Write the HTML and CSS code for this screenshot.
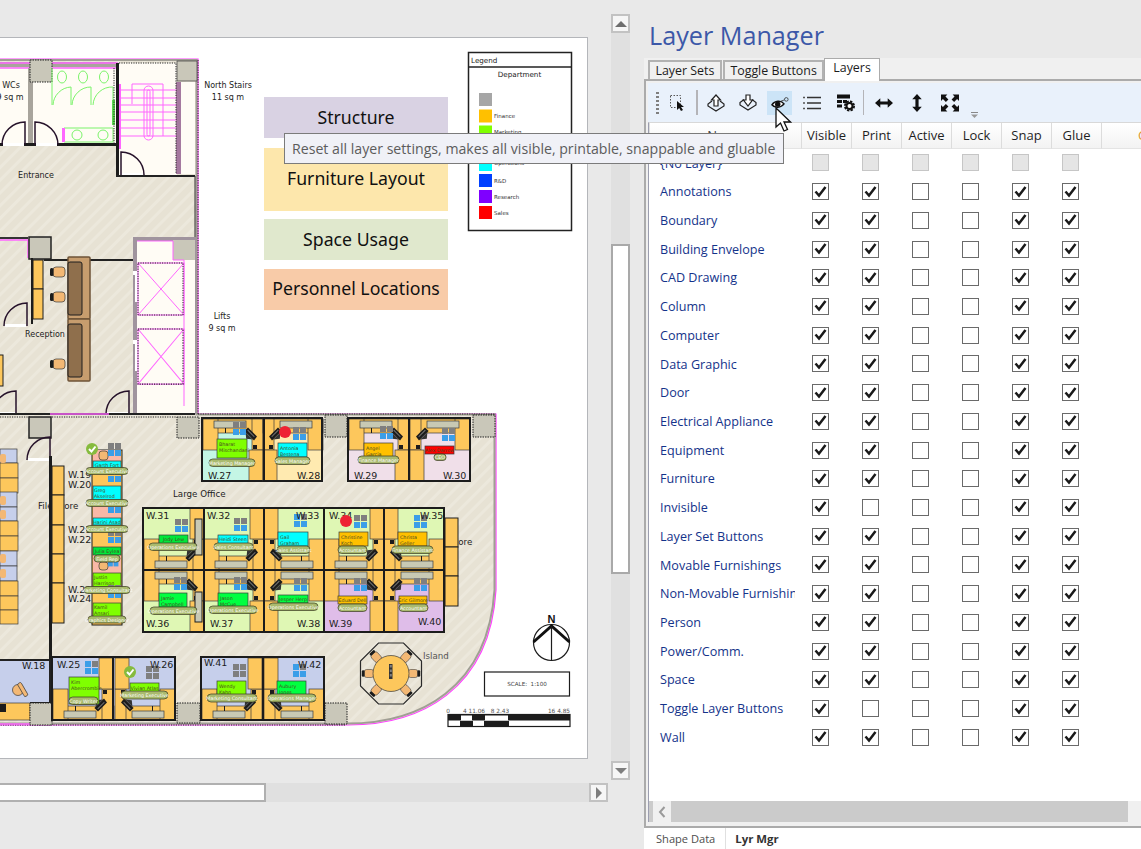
FILE: index.html
```html
<!DOCTYPE html>
<html lang="en">
<head>
<meta charset="utf-8">
<title>Layer Manager</title>
<link rel="stylesheet" href="styles.css">
</head>
<body>
<div class="app">
  <section class="work">
    <div class="page">
      <svg class="plan" viewBox="0 38 587 720" width="587" height="720" xmlns="http://www.w3.org/2000/svg">
        <defs>
          <path id="t" d="M3.500 8.500L7 12.500L13.500 4"/>
          <pattern id="hatch" width="9" height="9" patternUnits="userSpaceOnUse" patternTransform="rotate(45)">
            <rect width="9" height="9" class="f-floor"/>
            <rect width="3" height="9" class="f-hatch"/>
          </pattern>
          <g id="chair"><path d="M-8 -3L7 -3L8 3L-8 3Z" class="f-black"/><path d="M-6 3L6 3L0 8Z" class="f-dark"/><rect x="-6" y="-1" width="11" height="1" class="f-gray"/></g>
          <g id="ws">
            <rect x="0" y="0" width="60" height="14" class="f-org s-thin"/>
            <rect x="0" y="0" width="15" height="31" class="f-org s-thin"/>
            <rect x="49" y="0" width="11" height="31" class="f-org s-thin"/>
            <rect x="46" y="31" width="14" height="31" class="f-org s-thin"/>
            <rect x="11" y="2" width="32" height="7" class="f-shelf s-thin"/>
            <rect x="22" y="9" width="1" height="5" class="f-black"/>
            <use href="#chair" transform="translate(48,15) rotate(45) scale(.85)"/>
            <rect x="50" y="26" width="4" height="4" class="f-black"/>
          </g>
          <g id="ic"><rect x="0" y="0" width="6" height="6" class="f-gray"/><rect x="7" y="0" width="6" height="6" class="f-gray"/><rect x="0" y="7" width="6" height="6" class="f-blue"/><rect x="7" y="7" width="6" height="6" class="f-blue"/></g>
          <g id="icg"><rect x="0" y="0" width="6" height="6" class="f-gray"/><rect x="7" y="0" width="6" height="6" class="f-gray"/><rect x="0" y="7" width="6" height="6" class="f-gray"/><rect x="7" y="7" width="6" height="6" class="f-gray"/></g>
          <g id="icb"><rect x="0" y="0" width="6" height="6" class="f-blue"/><rect x="7" y="0" width="6" height="6" class="f-gray"/><rect x="0" y="7" width="6" height="6" class="f-blue"/><rect x="7" y="7" width="6" height="6" class="f-blue"/></g>
          <g id="door"><path d="M0 0V-23A23 23 0 0 0 -23 0" class="n-door"/><rect x="-22" y="-2" width="21" height="3" class="f-white"/></g>
          <g id="seat"><rect x="-6" y="-5" width="12" height="10" rx="3" class="f-tan s-thin"/><rect x="-9" y="-4" width="3.500" height="8" rx="1.500" class="f-black"/></g>
          <g id="lift"><rect width="46" height="52" class="n-mag"/><path d="M0 0L46 52M46 0L0 52" class="n-mag"/><rect x="0" y="0" width="45" height="52" class="n-dot"/></g>
        </defs>

        <rect x="0" y="38" width="587" height="720" class="f-white"/>

        <!-- building -->
        <path d="M-4 59H198V414H496V590C490 690 420 726 345 725H-4Z" class="f-hatchp s-mag"/>
        <path d="M-4 60H196.500V414.500H494.500V590C488 688 420 724 345 723.500H-4" class="n-outer"/>
        <path d="M198 60V414M198 414H496M345 725H-4" class="n-dot"/>

        <!-- toilets & north stairs -->
        <rect x="0" y="68" width="28" height="76" class="f-cream"/>
        <rect x="33" y="68" width="83" height="76" class="f-cream"/>
        <rect x="0" y="62" width="116" height="5" class="f-wall"/>
        <path d="M0 63H118M0 68H116" class="n-mag2"/>
        <rect x="28" y="68" width="5" height="76" class="f-wall"/>
        <rect x="0" y="143" width="118" height="3" class="f-black"/>
        <rect x="30" y="60" width="22" height="22" class="f-col s-dash"/>
        <g class="n-green">
          <ellipse cx="62" cy="77" rx="4.500" ry="6"/><ellipse cx="83" cy="77" rx="4.500" ry="6"/><ellipse cx="104" cy="77" rx="4.500" ry="6"/>
          <path d="M52 68V105M53 105A19 19 0 0 1 71 87V105M72 105A19 19 0 0 1 91 87V105M93 105A19 19 0 0 1 113 87V105"/>
          <path d="M64 128H113V142H64Z"/>
          <circle cx="77" cy="135" r="5"/><circle cx="103" cy="135" r="5"/>
        </g>
        <rect x="62" y="128" width="3" height="14" class="f-magenta"/>
        <rect x="112" y="100" width="3" height="25" class="f-green"/>
        <path d="M114 68V143" class="n-dot"/>
        <use href="#door" transform="translate(25,145)"/>
        <use href="#door" transform="translate(35,145) scale(-1,1)"/>

        <rect x="118" y="63" width="59" height="112" class="f-cream"/>
        <rect x="181" y="82" width="14" height="92" class="f-cream"/>
        <rect x="176" y="82" width="5" height="92" class="f-purple"/>
        <rect x="116" y="63" width="3" height="113" class="f-black"/>
        <rect x="177" y="61" width="20" height="20" class="f-col s-thin"/>
        <path d="M119 63H176V173M116 176H195" class="n-dot"/>
        <g class="n-mag">
          <path d="M119 90H176M119 98H176M119 105H176M119 112H176M119 120H176M119 128H176M119 136H176"/>
          <path d="M132 104V84H163V136"/>
          <rect x="144" y="86" width="9" height="54" rx="4.500"/>
          <rect x="147" y="90" width="3" height="46" rx="1.500"/>
        </g>
        <rect x="119" y="84" width="2" height="65" class="f-magenta"/>
        <use href="#door" transform="translate(121,175) scale(-1,1)"/>
        <path d="M116 176H195" class="n-wall"/>
        <path d="M195 176V237" class="n-wall1"/>

        <!-- reception -->
        <rect x="0" y="237" width="28" height="2" class="f-dark"/>
        <path d="M0 240H28V258" class="n-mag2"/>
        <rect x="29" y="237" width="22" height="22" class="f-col s-wall"/>
        <path d="M44 260H133" class="n-wall"/>
        <rect x="31" y="258" width="2" height="66" class="f-black"/>
        <rect x="33" y="260" width="10" height="29" class="f-org s-wall1"/>
        <rect x="33" y="289" width="10" height="30" class="f-org s-wall1"/>
        <use href="#door" transform="translate(27,326)"/>
        <rect x="68" y="257" width="22" height="62" rx="1" class="f-tan2 s-brown"/>
        <rect x="68" y="319" width="22" height="62" rx="1" class="f-tan2 s-brown"/>
        <rect x="68" y="262" width="14" height="53" rx="2" class="f-brown s-wall1"/>
        <rect x="68" y="324" width="14" height="53" rx="2" class="f-brown s-wall1"/>
        <use href="#seat" transform="translate(59,272)"/>
        <use href="#seat" transform="translate(59,297)"/>
        <use href="#seat" transform="translate(59,364)"/>
        <rect x="-2" y="355" width="5" height="31" class="f-org s-wall1"/>

        <!-- lifts -->
        <rect x="133" y="237" width="63" height="177" class="f-purple2"/>
        <rect x="137" y="241" width="58" height="172" class="f-cream"/>
        <rect x="173" y="240" width="22" height="20" class="f-col"/>
        <path d="M137 241H173V260H184V406" class="n-mag"/>
        <path d="M133 273H137V302M133 342H137V371" class="n-white"/>
        <use href="#lift" transform="translate(138,263)"/>
        <use href="#lift" transform="translate(138,329) scale(1,1.060)"/>
        <use href="#door" transform="translate(129,414)"/>
        <use href="#door" transform="translate(16,414)"/>

        <path d="M0 414H195" class="n-wall"/>
        <path d="M0 417H30M52 417H177" class="n-dot"/>
        <path d="M50 414H109" class="n-mag2"/>
        <rect x="29" y="417" width="22" height="21" class="f-col s-wall"/>
        <rect x="177" y="417" width="22" height="21" class="f-col s-dash"/>
        <rect x="325" y="415" width="22" height="22" class="f-col s-dash"/>
        <rect x="473" y="415" width="22" height="22" class="f-col s-dash"/>

        <!-- left wing -->
        <use href="#door" transform="translate(50,460)"/>
        <rect x="49" y="456" width="3" height="247" class="f-black"/>
        <rect x="0" y="449" width="17" height="14" class="f-bluer s-thin"/>
        <rect x="0" y="463" width="18" height="15" class="f-org s-thin"/><rect x="0" y="478" width="18" height="15" class="f-org s-thin"/>
        <rect x="0" y="492" width="17" height="15" class="f-bluer s-thin"/><rect x="0" y="507" width="17" height="14" class="f-bluer s-thin"/>
        <rect x="0" y="521" width="18" height="15" class="f-org s-thin"/><rect x="0" y="536" width="18" height="15" class="f-org s-thin"/>
        <rect x="0" y="551" width="17" height="15" class="f-bluer s-thin"/><rect x="0" y="566" width="17" height="15" class="f-bluer s-thin"/>
        <rect x="0" y="581" width="18" height="15" class="f-org s-thin"/><rect x="0" y="596" width="18" height="14" class="f-org s-thin"/>
        <rect x="0" y="610" width="18" height="14" class="f-org s-thin"/>
        <rect x="0" y="454" width="6" height="9" rx="2" class="f-tan"/><rect x="0" y="496" width="6" height="9" rx="2" class="f-tan"/><rect x="0" y="510" width="6" height="9" rx="2" class="f-tan"/><rect x="0" y="554" width="6" height="9" rx="2" class="f-tan"/><rect x="0" y="569" width="6" height="9" rx="2" class="f-tan"/>
        <text x="38" y="509" class="t-lab2">File Store</text>
        <rect x="52" y="466" width="12" height="29" class="f-org s-wall1"/><rect x="52" y="495" width="12" height="30" class="f-org s-wall1"/><rect x="52" y="525" width="12" height="29" class="f-org s-wall1"/><rect x="52" y="554" width="12" height="29" class="f-org s-wall1"/><rect x="52" y="583" width="12" height="40" class="f-org s-wall1"/>

        <!-- centre column stack -->
        <rect x="92" y="450" width="30" height="175" class="f-org s-wall1"/>
        <rect x="93" y="450" width="28" height="11" class="f-salmon"/>
        <rect x="93" y="500" width="28" height="18" class="f-salmon"/>
        <rect x="93" y="555" width="28" height="18" class="f-salmon"/>
        <rect x="99" y="451" width="9" height="9" rx="3" class="f-tan s-thin"/><rect x="99" y="562" width="9" height="8" rx="3" class="f-tan s-thin"/>
        <rect x="93" y="461" width="28" height="8" class="f-cyan s-thin"/><text x="107" y="467" class="t-card m">Garth Fort</text>
        <rect x="93" y="486" width="28" height="14" class="f-cyan s-thin"/><text x="94" y="492" class="t-card">Greg</text><text x="94" y="498" class="t-card">Akselrod</text>
        <rect x="93" y="518" width="28" height="7" class="f-cyan s-thin"/><text x="107" y="524" class="t-card m">Harini Asad</text>
        <rect x="93" y="547" width="28" height="8" class="f-lime2 s-thin"/><text x="107" y="553" class="t-card m">Julia Eylea</text>
        <rect x="93" y="573" width="28" height="14" class="f-lime s-thin"/><text x="94" y="579" class="t-card">Justin</text><text x="94" y="585" class="t-card">Harrison</text>
        <rect x="93" y="603" width="28" height="17" class="f-lime s-thin"/><text x="94" y="609" class="t-card">Kamil</text><text x="94" y="615" class="t-card">Ansari</text>
        <use href="#ic" transform="translate(108,443)"/>
        <use href="#ic" transform="translate(108,469)"/>
        <use href="#ic" transform="translate(108,500)"/>
        <use href="#ic" transform="translate(108,530)"/>
        <use href="#icb" transform="translate(108,556) scale(.8)"/>
        <use href="#ic" transform="translate(108,585)"/>
        <text x="68" y="479" class="t-w">W.19</text><text x="68" y="489" class="t-w">W.20</text>
        <text x="68" y="534" class="t-w">W.21</text><text x="68" y="544" class="t-w">W.22</text>
        <text x="68" y="594" class="t-w">W.23</text><text x="68" y="603" class="t-w">W.24</text>
        <rect x="86" y="467.500" width="42" height="7" rx="3.500" class="f-pill s-pill"/><text x="107" y="473" class="t-pill">Account Executive</text>
        <rect x="86" y="499.500" width="42" height="7" rx="3.500" class="f-pill s-pill"/><text x="107" y="505" class="t-pill">Account Executive</text>
        <rect x="86" y="525.500" width="42" height="7" rx="3.500" class="f-pill s-pill"/><text x="107" y="531" class="t-pill">Account Executive</text>
        <rect x="94" y="555" width="26" height="7" rx="3.500" class="f-pill s-pill"/><text x="107" y="560.500" class="t-pill">Field Rep</text>
        <rect x="84" y="586.500" width="46" height="7" rx="3.500" class="f-pill s-pill"/><text x="107" y="592" class="t-pill">Marketing Consultant</text>
        <rect x="88" y="616" width="38" height="7" rx="3.500" class="f-pill s-pill"/><text x="107" y="621.500" class="t-pill">Graphics Designer</text>
        <circle cx="92" cy="449" r="6" class="f-check"/><path d="M89 449L91.500 451.500L95.500 446.500" class="n-tick"/>

        <text x="173" y="497" class="t-lab2">Large Office</text>

        <!-- top row -->
        <rect x="202" y="418" width="62" height="63" class="f-mint"/>
        <use href="#ws" transform="translate(203,419)"/>
        <rect x="202" y="418" width="62" height="63" class="n-box"/>
        <text x="208" y="480" class="t-w">W.27</text>
        <use href="#ic" transform="translate(233,422)"/>
        <rect x="217" y="439" width="30" height="19" class="f-lime s-thin"/><text x="219" y="446" class="t-card">Bharat</text><text x="219" y="452" class="t-card">Mischandani</text>
        <rect x="209" y="459" width="46" height="7.500" rx="3.700" class="f-pill s-pill"/><text x="232" y="465" class="t-pill">Marketing Manager</text>

        <rect x="264" y="418" width="58" height="63" class="f-cream2"/>
        <use href="#ws" transform="translate(323,419) scale(-1,1)"/>
        <rect x="264" y="418" width="58" height="63" class="n-box"/>
        <text x="297" y="480" class="t-w">W.28</text>
        <circle cx="285" cy="432" r="6" class="f-red"/>
        <use href="#ic" transform="translate(293,427)"/>
        <rect x="278" y="443" width="29" height="14" class="f-cyan s-thin"/><text x="280" y="450" class="t-card">Antonia</text><text x="280" y="456" class="t-card">Bestena</text>
        <rect x="275" y="457" width="35" height="7.500" rx="3.700" class="f-pill s-pill"/><text x="292.500" y="463" class="t-pill">Sales Manager</text>

        <rect x="348" y="418" width="61" height="63" class="f-pink"/>
        <use href="#ws" transform="translate(349,419)"/>
        <rect x="348" y="418" width="61" height="63" class="n-box"/>
        <text x="354" y="480" class="t-w">W.29</text>
        <use href="#ic" transform="translate(380,426)"/>
        <rect x="364" y="443" width="29" height="14" class="f-amber s-thin"/><text x="366" y="450" class="t-card">Angel</text><text x="366" y="456" class="t-card">Garcia</text>
        <rect x="358" y="456" width="41" height="7.500" rx="3.700" class="f-pill s-pill"/><text x="378.500" y="462" class="t-pill">Finance Manager</text>

        <rect x="409" y="418" width="61" height="63" class="f-pink"/>
        <use href="#ws" transform="translate(470,419) scale(-1,1)"/>
        <rect x="409" y="418" width="61" height="63" class="n-box"/>
        <text x="443" y="480" class="t-w">W.30</text>
        <use href="#ic" transform="translate(442,428)"/>
        <rect x="425" y="446" width="29" height="8" class="f-red2 s-thin"/><text x="439.500" y="452" class="t-card m">Alex Darrow</text>
        <rect x="434" y="454" width="12" height="6.500" rx="3" class="f-pill s-pill"/><text x="440" y="459" class="t-pill">CEO</text>

        <!-- file store, right -->
        <text x="432" y="545" class="t-lab2">File Store</text>
        <rect x="445" y="518" width="13" height="29" class="f-org s-wall1"/><rect x="445" y="547" width="13" height="29" class="f-org s-wall1"/><rect x="445" y="576" width="13" height="30" class="f-org s-wall1"/>

        <!-- row 2 -->
        <rect x="143" y="508" width="61" height="62" class="f-green2"/>
        <use href="#ws" transform="translate(144,570) scale(1,-1)"/>
        <rect x="195" y="519" width="7" height="36" class="f-shelf s-wall1"/>
        <rect x="143" y="508" width="61" height="62" class="n-box"/>
        <text x="146" y="520" class="t-w">W.31</text>
        <use href="#ic" transform="translate(175,519)"/>
        <rect x="159" y="535" width="29" height="9" class="f-lime2 s-thin"/><text x="173.500" y="541" class="t-card m">Jody Lew</text>
        <rect x="149" y="543" width="48" height="7.500" rx="3.700" class="f-pill s-pill"/><text x="173" y="549" class="t-pill">Operations Executive</text>

        <rect x="204" y="508" width="60" height="62" class="f-green2"/>
        <use href="#ws" transform="translate(204,570) scale(1,-1)"/>
        <rect x="204" y="508" width="60" height="62" class="n-box"/>
        <text x="207" y="520" class="t-w">W.32</text>
        <use href="#ic" transform="translate(234,518)"/>
        <rect x="218" y="535" width="30" height="9" class="f-cyan s-thin"/><text x="233" y="541" class="t-card m">Heidi Steen</text>
        <rect x="214" y="543" width="39" height="7.500" rx="3.700" class="f-pill s-pill"/><text x="233.500" y="549" class="t-pill">Sales Consultant</text>

        <rect x="264" y="508" width="60" height="62" class="f-green2"/>
        <use href="#ws" transform="translate(324,570) scale(-1,-1)"/>
        <rect x="264" y="508" width="60" height="62" class="n-box"/>
        <use href="#icb" transform="translate(294,514)"/>
        <text x="296" y="520" class="t-w">W.33</text>
        <rect x="278" y="532" width="30" height="14" class="f-cyan s-thin"/><text x="280" y="539" class="t-card">Gail</text><text x="280" y="545" class="t-card">Graham</text>
        <rect x="277" y="546" width="33" height="7.500" rx="3.700" class="f-pill s-pill"/><text x="293.500" y="552" class="t-pill">Sales Assistant</text>

        <rect x="324" y="508" width="60" height="62" class="f-green2"/>
        <use href="#ws" transform="translate(324,570) scale(1,-1)"/>
        <rect x="324" y="508" width="60" height="62" class="n-box"/>
        <text x="329" y="520" class="t-w">W.34</text>
        <circle cx="346" cy="521" r="6" class="f-red"/>
        <use href="#ic" transform="translate(354,515)"/>
        <rect x="339" y="532" width="29" height="14" class="f-amber s-thin"/><text x="341" y="539" class="t-card">Christine</text><text x="341" y="545" class="t-card">Koch</text>
        <rect x="338" y="546" width="29" height="7.500" rx="3.700" class="f-pill s-pill"/><text x="352.500" y="552" class="t-pill">Accountant</text>

        <rect x="384" y="508" width="60" height="62" class="f-green2"/>
        <use href="#ws" transform="translate(444,570) scale(-1,-1)"/>
        <rect x="384" y="508" width="60" height="62" class="n-box"/>
        <use href="#icb" transform="translate(414,515)"/>
        <text x="420" y="520" class="t-w">W.35</text>
        <rect x="398" y="532" width="29" height="14" class="f-amber s-thin"/><text x="400" y="539" class="t-card">Christa</text><text x="400" y="545" class="t-card">Geller</text>
        <rect x="392" y="546" width="41" height="7.500" rx="3.700" class="f-pill s-pill"/><text x="412.500" y="552" class="t-pill">Finance Assistant</text>

        <!-- row 3 -->
        <rect x="143" y="570" width="61" height="62" class="f-green2"/>
        <use href="#ws" transform="translate(144,570)"/>
        <rect x="195" y="592" width="7" height="30" class="f-shelf s-wall1"/>
        <rect x="143" y="570" width="61" height="62" class="n-box"/>
        <text x="146" y="628" class="t-w">W.36</text>
        <use href="#ic" transform="translate(174,577)"/>
        <rect x="159" y="593" width="28" height="14" class="f-lime3 s-thin"/><text x="161" y="600" class="t-card">Jamie</text><text x="161" y="606" class="t-card">Campbell</text>
        <rect x="150" y="607" width="47" height="7.500" rx="3.700" class="f-pill s-pill"/><text x="173.500" y="613" class="t-pill">Operations Executive</text>

        <rect x="204" y="570" width="60" height="62" class="f-green2"/>
        <use href="#ws" transform="translate(204,570)"/>
        <rect x="204" y="570" width="60" height="62" class="n-box"/>
        <text x="210" y="628" class="t-w">W.37</text>
        <use href="#ic" transform="translate(234,577)"/>
        <rect x="218" y="593" width="30" height="14" class="f-lime3 s-thin"/><text x="220" y="600" class="t-card">Jason</text><text x="220" y="606" class="t-card">McCue</text>
        <rect x="209" y="606" width="48" height="7.500" rx="3.700" class="f-pill s-pill"/><text x="233" y="612" class="t-pill">Operations Executive</text>

        <rect x="264" y="570" width="60" height="62" class="f-green2"/>
        <use href="#ws" transform="translate(324,570) scale(-1,1)"/>
        <rect x="264" y="570" width="60" height="62" class="n-box"/>
        <text x="297" y="628" class="t-w">W.38</text>
        <use href="#ic" transform="translate(294,578)"/>
        <rect x="278" y="595" width="30" height="8" class="f-lime3 s-thin"/><text x="293" y="601" class="t-card m">Jesper Herp</text>
        <rect x="269" y="603" width="49" height="7.500" rx="3.700" class="f-pill s-pill"/><text x="293.500" y="609" class="t-pill">Operations Executive</text>

        <rect x="324" y="570" width="60" height="62" class="f-lilac"/>
        <use href="#ws" transform="translate(324,570)"/>
        <rect x="324" y="570" width="60" height="62" class="n-box"/>
        <text x="329" y="628" class="t-w">W.39</text>
        <use href="#ic" transform="translate(354,578)"/>
        <rect x="338" y="596" width="29" height="8" class="f-amber s-thin"/><text x="352.500" y="602" class="t-card m">Eduard Dell</text>
        <rect x="338" y="604" width="29" height="7.500" rx="3.700" class="f-pill s-pill"/><text x="352.500" y="610" class="t-pill">Accountant</text>

        <rect x="384" y="570" width="60" height="62" class="f-lilac"/>
        <use href="#ws" transform="translate(444,570) scale(-1,1)"/>
        <rect x="384" y="570" width="60" height="62" class="n-box"/>
        <text x="418" y="626" class="t-w">W.40</text>
        <use href="#ic" transform="translate(414,578)"/>
        <rect x="399" y="596" width="28" height="8" class="f-amber s-thin"/><text x="413" y="602" class="t-card m">Eric Gilmore</text>
        <rect x="399" y="604" width="29" height="7.500" rx="3.700" class="f-pill s-pill"/><text x="413.500" y="610" class="t-pill">Accountant</text>

        <!-- bottom row -->
        <rect x="-2" y="660" width="52" height="44" class="f-bluer s-wall1"/>
        <rect x="-2" y="703" width="32" height="17" class="f-org s-thin"/>
        <path d="M0 660H50V703H30" class="n-wall"/>
        <text x="22" y="670" class="t-w">W.18</text>
        <circle cx="18" cy="690" r="5.500" class="f-tan s-thin"/><rect x="21" y="682" width="4" height="15" rx="1.500" transform="rotate(-30 23 690)" class="f-tan s-thin"/>
        <rect x="0" y="704" width="6" height="8" class="f-black"/>
        <path d="M0 724H30" class="n-mag2"/>
        <rect x="30" y="703" width="22" height="22" class="f-col s-dash"/>
        <rect x="177" y="703" width="23" height="20" class="f-col s-dash"/>
        <rect x="325" y="703" width="22" height="21" class="f-col s-dash"/>

        <rect x="52" y="657" width="61" height="63" class="f-bluer"/>
        <use href="#ws" transform="translate(53,720) scale(1,-1)"/>
        <rect x="52" y="657" width="61" height="63" class="n-box"/>
        <text x="57" y="669" class="t-w">W.25</text>
        <use href="#icb" transform="translate(85,661)"/>
        <rect x="69" y="677" width="30" height="27" class="f-lime s-thin"/><text x="71" y="684" class="t-card">Kim</text><text x="71" y="690" class="t-card">Abercrombie</text>
        <rect x="69" y="697" width="29" height="7.500" rx="3.700" class="f-pill s-pill"/><text x="83.500" y="703" class="t-pill">Copy Writer</text>

        <rect x="113" y="657" width="62" height="63" class="f-bluer"/>
        <use href="#ws" transform="translate(175,720) scale(-1,-1)"/>
        <rect x="113" y="657" width="62" height="63" class="n-box"/>
        <use href="#icg" transform="translate(146,666)"/>
        <text x="150" y="669" class="t-w">W.26</text>
        <rect x="130" y="683" width="29" height="9" class="f-lime s-thin"/><text x="144.500" y="690" class="t-card m">Vivian Atlas</text>
        <rect x="121" y="691" width="47" height="8" rx="4" class="f-pill s-pill"/><text x="144.500" y="697" class="t-pill">Marketing Executive</text>
        <circle cx="130" cy="672" r="6" class="f-check"/><path d="M127 672L129.500 674.500L133.500 669.500" class="n-tick"/>

        <rect x="201" y="657" width="62" height="63" class="f-bluer"/>
        <use href="#ws" transform="translate(202,720) scale(1,-1)"/>
        <rect x="201" y="657" width="62" height="63" class="n-box"/>
        <text x="204" y="667" class="t-w">W.41</text>
        <use href="#icg" transform="translate(233,664)"/>
        <rect x="217" y="681" width="29" height="18" class="f-lime s-thin"/><text x="219" y="688" class="t-card">Wendy</text><text x="219" y="694" class="t-card">Kahn</text>
        <rect x="207" y="694" width="50" height="8" rx="4" class="f-pill s-pill"/><text x="232" y="700" class="t-pill">Marketing Consultant</text>

        <rect x="263" y="657" width="61" height="63" class="f-bluer"/>
        <use href="#ws" transform="translate(324,720) scale(-1,-1)"/>
        <rect x="263" y="657" width="61" height="63" class="n-box"/>
        <use href="#icb" transform="translate(293,664)"/>
        <text x="298" y="669" class="t-w">W.42</text>
        <rect x="277" y="681" width="29" height="18" class="f-lime3 s-thin"/><text x="279" y="688" class="t-card">Aubury</text><text x="279" y="694" class="t-card">Jones</text>
        <rect x="268" y="694" width="48" height="8" rx="4" class="f-pill s-pill"/><text x="292" y="700" class="t-pill">Operations Manager</text>

        <!-- island -->
        <path d="M378.500 643H403.500L421.500 661V686L403.500 704H378.500L360.500 686V661Z" class="n-oct"/>
        <g transform="translate(391,673.500)">
          <use href="#seat" transform="rotate(0) translate(-22,0) scale(.8)"/>
          <use href="#seat" transform="rotate(180) translate(-22,0) scale(.8)"/>
          <use href="#seat" transform="rotate(48) translate(-22,0) scale(.8)"/>
          <use href="#seat" transform="rotate(132) translate(-22,0) scale(.8)"/>
          <use href="#seat" transform="rotate(228) translate(-22,0) scale(.8)"/>
          <use href="#seat" transform="rotate(312) translate(-22,0) scale(.8)"/>
          <circle r="18" class="f-org s-thin"/>
          <rect x="-2" y="-9.500" width="3.500" height="15" class="f-dark"/>
          <rect x="-1.200" y="-8.500" width="2" height="2.500" class="f-gray"/><rect x="-1.200" y="-4" width="2" height="2.500" class="f-gray"/><rect x="-1.200" y="0.500" width="2" height="2.500" class="f-gray"/>
        </g>
        <text x="423" y="659" class="t-lab2 g">Island</text>

        <text x="228" y="88" class="t-lab m">North Stairs</text>
        <text x="228" y="100" class="t-lab m">11 sq m</text>
        <text x="11" y="88" class="t-lab m">WCs</text>
        <text x="10" y="100" class="t-lab m">9 sq m</text>
        <text x="36" y="178" class="t-lab m">Entrance</text>
        <text x="45" y="337" class="t-lab m">Reception</text>
        <text x="222" y="319" class="t-lab m">Lifts</text>
        <text x="222" y="331" class="t-lab m">9 sq m</text>

        <!-- buttons -->
        <rect x="264" y="97" width="184" height="41" class="f-b1"/>
        <rect x="264" y="148" width="184" height="63" class="f-b2"/>
        <rect x="264" y="219" width="184" height="41" class="f-b3"/>
        <rect x="264" y="269" width="184" height="41" class="f-b4"/>
        <text x="356" y="124" class="t-btn">Structure</text>
        <text x="356" y="185" class="t-btn">Furniture Layout</text>
        <text x="356" y="246" class="t-btn">Space Usage</text>
        <text x="356" y="295" class="t-btn">Personnel Locations</text>

        <!-- legend -->
        <rect x="468.500" y="52.500" width="103" height="178" class="n-leg"/>
        <path d="M468 67H572" class="n-leg"/>
        <text x="471" y="63" class="t-leg">Legend</text>
        <text x="519.500" y="77" class="t-leg m">Department</text>
        <rect x="479" y="93" width="13" height="13" class="f-l1"/>
        <rect x="479" y="109.500" width="13" height="13" class="f-amber"/>
        <rect x="479" y="125.500" width="13" height="13" class="f-lime"/>
        <rect x="479" y="158" width="13" height="13" class="f-cyan"/>
        <rect x="479" y="174" width="13" height="13" class="f-l2"/>
        <rect x="479" y="190" width="13" height="13" class="f-l3"/>
        <rect x="479" y="206" width="13" height="13" class="f-red2"/>
        <text x="494" y="118" class="t-lg">Finance</text>
        <text x="494" y="134" class="t-lg">Marketing</text>
        <text x="494" y="165" class="t-lg">Operations</text>
        <text x="494" y="183" class="t-lg">R&amp;D</text>
        <text x="494" y="199" class="t-lg">Research</text>
        <text x="494" y="215" class="t-lg">Sales</text>

        <!-- compass -->
        <text x="551.500" y="623" class="t-n">N</text>
        <circle cx="551.500" cy="642.500" r="18" class="n-thin"/>
        <path d="M533.500 642L551.500 626L569.500 642" class="n-thick"/>
        <path d="M551.500 626V661" class="n-thin"/>

        <!-- scale -->
        <rect x="484.500" y="672" width="85" height="24" class="n-thin"/>
        <text x="527" y="686" class="t-sc">SCALE:  1:100</text>
        <text x="448" y="713" class="t-sb">0</text>
        <text x="474" y="713" class="t-sb">4 11.06</text>
        <text x="500" y="713" class="t-sb">8 2.43</text>
        <text x="559" y="713" class="t-sb">16 4.85</text>
        <rect x="448" y="714.500" width="122" height="12" class="n-thin"/>
        <rect x="448" y="714.500" width="122" height="6" class="f-black"/>
        <rect x="461" y="715.500" width="11" height="5" class="f-white"/>
        <rect x="485" y="715.500" width="23" height="5" class="f-white"/>
        <rect x="460" y="721" width="13" height="6" class="f-black"/>
        <rect x="484" y="721" width="25" height="6" class="f-black"/>
      </svg>
    </div>
    <div class="vscroll">
      <button class="sbtn" aria-label="up"><span class="tri up"></span></button>
      <div class="strack"></div>
      <div class="sthumb"></div>
      <div class="strack short"></div>
      <button class="sbtn" aria-label="down"><span class="tri down"></span></button>
    </div>
    <div class="hscroll">
      <div class="hthumb"></div>
      <div class="htrack"></div>
      <button class="sbtn" aria-label="right"><span class="tri right"></span></button>
    </div>
  </section>

  <aside class="panel">
    <h1 class="title">Layer Manager</h1>
    <nav class="tabs">
      <span class="tab">Layer Sets</span>
      <span class="tab">Toggle Buttons</span>
      <span class="tab active">Layers</span>
    </nav>
    <div class="frame">
      <div class="toolbar">
        <span class="grip"></span>
        <svg class="ti w14" viewBox="0 0 14 17"><rect x=".5" y="1.500" width="10" height="12" class="i-dash"/><path d="M7 7V16L9.200 14L11 17L13 16L11 13H14Z" class="i-fill"/></svg>
        <span class="tsep"></span>
        <svg class="ti w18 up1" viewBox="0 0 18 18"><path d="M5 7L1 10V12L9 17L17 12V10L13 7" class="i-line"/><path d="M9 1L13.500 6H11V12H7V6H4.500Z" class="i-white"/></svg>
        <svg class="ti w18 dn1" viewBox="0 0 18 18"><path d="M5 5.500L1 8.500V11L9 16L17 11V8.500L13 5.500" class="i-line"/><path d="M7 1H11V6H13.500L9 12L4.500 6H7Z" class="i-white"/></svg>
        <span class="hot">
          <svg class="ti w18" viewBox="0 0 20 14"><path d="M1 9C4 4.500 11 3.500 14.500 8C11 12.500 4 13 1 9Z" class="i-eye"/><circle cx="7.500" cy="8.300" r="3" class="i-fill"/><circle cx="17" cy="3" r="2" class="i-thin"/><path d="M11 5L15 3.500" class="i-thin"/></svg>
        </span>
        <svg class="ti w18 lst" viewBox="0 0 18 15"><path d="M0 2H2M0 7.500H2M0 13H2" class="i-dots"/><path d="M4 2H18M4 7.500H18M4 13H18" class="i-bar"/></svg>
        <svg class="ti w18 cfg" viewBox="0 0 18 17"><rect x="0" y="0" width="13" height="4" class="i-fill"/><rect x="0" y="5.500" width="5" height="3" class="i-fill"/><rect x="6" y="5.500" width="4" height="3" class="i-fill"/><rect x="0" y="10" width="5" height="3" class="i-fill"/><circle cx="12.500" cy="11.500" r="3" class="i-ring"/><circle cx="12.500" cy="11.500" r="4.600" class="i-gear"/></svg>
        <span class="tsep s2"></span>
        <svg class="ti w18 ha" viewBox="0 0 17 11"><path d="M0 5.500L5 1V4H12V1L17 5.500L12 10V7H5V10Z" class="i-fill"/></svg>
        <svg class="ti w18 va" viewBox="0 0 11 17"><path d="M5.500 0L10 5H7V12H10L5.500 17L1 12H4V5H1Z" class="i-fill"/></svg>
        <svg class="ti w18 ex" viewBox="0 0 17 16"><path d="M0 0H6L4.200 1.800L7 4.600L4.600 7L1.800 4.200L0 6ZM17 0V6L15.200 4.200L12.400 7L10 4.600L12.800 1.800L11 0ZM0 16V10L1.800 11.800L4.600 9L7 11.400L4.200 14.200L6 16ZM17 16H11L12.800 14.200L10 11.400L12.400 9L15.200 11.800L17 10Z" class="i-fill"/></svg>
        <svg class="ti more" viewBox="0 0 7 6"><path d="M0 .5H7" class="i-gline"/><path d="M0 2.500H7L3.500 6Z" class="i-gfill"/></svg>
      </div>
      <div class="grid-wrap">
        <div class="grid">
          <div class="hc name-h">Name</div><div class="hc">Visible</div><div class="hc">Print</div><div class="hc">Active</div><div class="hc">Lock</div><div class="hc">Snap</div><div class="hc">Glue</div><div class="hc more-h">G</div>

          <div class="nm">{No Layer}</div><div class="c"><span class="cb off"></span></div><div class="c"><span class="cb off"></span></div><div class="c"><span class="cb off"></span></div><div class="c"><span class="cb off"></span></div><div class="c"><span class="cb off"></span></div><div class="c"><span class="cb off"></span></div><div></div>

          <div class="nm">Annotations</div><div class="c"><span class="cb"><svg viewBox="0 0 17 17"><use href="#t"/></svg></span></div><div class="c"><span class="cb"><svg viewBox="0 0 17 17"><use href="#t"/></svg></span></div><div class="c"><span class="cb"></span></div><div class="c"><span class="cb"></span></div><div class="c"><span class="cb"><svg viewBox="0 0 17 17"><use href="#t"/></svg></span></div><div class="c"><span class="cb"><svg viewBox="0 0 17 17"><use href="#t"/></svg></span></div><div></div>

          <div class="nm">Boundary</div><div class="c"><span class="cb"><svg viewBox="0 0 17 17"><use href="#t"/></svg></span></div><div class="c"><span class="cb"><svg viewBox="0 0 17 17"><use href="#t"/></svg></span></div><div class="c"><span class="cb"></span></div><div class="c"><span class="cb"></span></div><div class="c"><span class="cb"><svg viewBox="0 0 17 17"><use href="#t"/></svg></span></div><div class="c"><span class="cb"><svg viewBox="0 0 17 17"><use href="#t"/></svg></span></div><div></div>

          <div class="nm">Building Envelope</div><div class="c"><span class="cb"><svg viewBox="0 0 17 17"><use href="#t"/></svg></span></div><div class="c"><span class="cb"><svg viewBox="0 0 17 17"><use href="#t"/></svg></span></div><div class="c"><span class="cb"></span></div><div class="c"><span class="cb"></span></div><div class="c"><span class="cb"><svg viewBox="0 0 17 17"><use href="#t"/></svg></span></div><div class="c"><span class="cb"><svg viewBox="0 0 17 17"><use href="#t"/></svg></span></div><div></div>

          <div class="nm">CAD Drawing</div><div class="c"><span class="cb"><svg viewBox="0 0 17 17"><use href="#t"/></svg></span></div><div class="c"><span class="cb"><svg viewBox="0 0 17 17"><use href="#t"/></svg></span></div><div class="c"><span class="cb"></span></div><div class="c"><span class="cb"></span></div><div class="c"><span class="cb"><svg viewBox="0 0 17 17"><use href="#t"/></svg></span></div><div class="c"><span class="cb"><svg viewBox="0 0 17 17"><use href="#t"/></svg></span></div><div></div>

          <div class="nm">Column</div><div class="c"><span class="cb"><svg viewBox="0 0 17 17"><use href="#t"/></svg></span></div><div class="c"><span class="cb"><svg viewBox="0 0 17 17"><use href="#t"/></svg></span></div><div class="c"><span class="cb"></span></div><div class="c"><span class="cb"></span></div><div class="c"><span class="cb"><svg viewBox="0 0 17 17"><use href="#t"/></svg></span></div><div class="c"><span class="cb"><svg viewBox="0 0 17 17"><use href="#t"/></svg></span></div><div></div>

          <div class="nm">Computer</div><div class="c"><span class="cb"><svg viewBox="0 0 17 17"><use href="#t"/></svg></span></div><div class="c"><span class="cb"><svg viewBox="0 0 17 17"><use href="#t"/></svg></span></div><div class="c"><span class="cb"></span></div><div class="c"><span class="cb"></span></div><div class="c"><span class="cb"><svg viewBox="0 0 17 17"><use href="#t"/></svg></span></div><div class="c"><span class="cb"><svg viewBox="0 0 17 17"><use href="#t"/></svg></span></div><div></div>

          <div class="nm">Data Graphic</div><div class="c"><span class="cb"><svg viewBox="0 0 17 17"><use href="#t"/></svg></span></div><div class="c"><span class="cb"><svg viewBox="0 0 17 17"><use href="#t"/></svg></span></div><div class="c"><span class="cb"></span></div><div class="c"><span class="cb"></span></div><div class="c"><span class="cb"><svg viewBox="0 0 17 17"><use href="#t"/></svg></span></div><div class="c"><span class="cb"><svg viewBox="0 0 17 17"><use href="#t"/></svg></span></div><div></div>

          <div class="nm">Door</div><div class="c"><span class="cb"><svg viewBox="0 0 17 17"><use href="#t"/></svg></span></div><div class="c"><span class="cb"><svg viewBox="0 0 17 17"><use href="#t"/></svg></span></div><div class="c"><span class="cb"></span></div><div class="c"><span class="cb"></span></div><div class="c"><span class="cb"><svg viewBox="0 0 17 17"><use href="#t"/></svg></span></div><div class="c"><span class="cb"><svg viewBox="0 0 17 17"><use href="#t"/></svg></span></div><div></div>

          <div class="nm">Electrical Appliance</div><div class="c"><span class="cb"><svg viewBox="0 0 17 17"><use href="#t"/></svg></span></div><div class="c"><span class="cb"><svg viewBox="0 0 17 17"><use href="#t"/></svg></span></div><div class="c"><span class="cb"></span></div><div class="c"><span class="cb"></span></div><div class="c"><span class="cb"><svg viewBox="0 0 17 17"><use href="#t"/></svg></span></div><div class="c"><span class="cb"><svg viewBox="0 0 17 17"><use href="#t"/></svg></span></div><div></div>

          <div class="nm">Equipment</div><div class="c"><span class="cb"><svg viewBox="0 0 17 17"><use href="#t"/></svg></span></div><div class="c"><span class="cb"><svg viewBox="0 0 17 17"><use href="#t"/></svg></span></div><div class="c"><span class="cb"></span></div><div class="c"><span class="cb"></span></div><div class="c"><span class="cb"><svg viewBox="0 0 17 17"><use href="#t"/></svg></span></div><div class="c"><span class="cb"><svg viewBox="0 0 17 17"><use href="#t"/></svg></span></div><div></div>

          <div class="nm">Furniture</div><div class="c"><span class="cb"><svg viewBox="0 0 17 17"><use href="#t"/></svg></span></div><div class="c"><span class="cb"><svg viewBox="0 0 17 17"><use href="#t"/></svg></span></div><div class="c"><span class="cb"></span></div><div class="c"><span class="cb"></span></div><div class="c"><span class="cb"><svg viewBox="0 0 17 17"><use href="#t"/></svg></span></div><div class="c"><span class="cb"><svg viewBox="0 0 17 17"><use href="#t"/></svg></span></div><div></div>

          <div class="nm">Invisible</div><div class="c"><span class="cb"><svg viewBox="0 0 17 17"><use href="#t"/></svg></span></div><div class="c"><span class="cb"></span></div><div class="c"><span class="cb"></span></div><div class="c"><span class="cb"></span></div><div class="c"><span class="cb"><svg viewBox="0 0 17 17"><use href="#t"/></svg></span></div><div class="c"><span class="cb"><svg viewBox="0 0 17 17"><use href="#t"/></svg></span></div><div></div>

          <div class="nm">Layer Set Buttons</div><div class="c"><span class="cb"><svg viewBox="0 0 17 17"><use href="#t"/></svg></span></div><div class="c"><span class="cb"><svg viewBox="0 0 17 17"><use href="#t"/></svg></span></div><div class="c"><span class="cb"></span></div><div class="c"><span class="cb"></span></div><div class="c"><span class="cb"><svg viewBox="0 0 17 17"><use href="#t"/></svg></span></div><div class="c"><span class="cb"><svg viewBox="0 0 17 17"><use href="#t"/></svg></span></div><div></div>

          <div class="nm">Movable Furnishings</div><div class="c"><span class="cb"><svg viewBox="0 0 17 17"><use href="#t"/></svg></span></div><div class="c"><span class="cb"><svg viewBox="0 0 17 17"><use href="#t"/></svg></span></div><div class="c"><span class="cb"></span></div><div class="c"><span class="cb"></span></div><div class="c"><span class="cb"><svg viewBox="0 0 17 17"><use href="#t"/></svg></span></div><div class="c"><span class="cb"><svg viewBox="0 0 17 17"><use href="#t"/></svg></span></div><div></div>

          <div class="nm">Non-Movable Furnishings</div><div class="c"><span class="cb"><svg viewBox="0 0 17 17"><use href="#t"/></svg></span></div><div class="c"><span class="cb"><svg viewBox="0 0 17 17"><use href="#t"/></svg></span></div><div class="c"><span class="cb"></span></div><div class="c"><span class="cb"></span></div><div class="c"><span class="cb"><svg viewBox="0 0 17 17"><use href="#t"/></svg></span></div><div class="c"><span class="cb"><svg viewBox="0 0 17 17"><use href="#t"/></svg></span></div><div></div>

          <div class="nm">Person</div><div class="c"><span class="cb"><svg viewBox="0 0 17 17"><use href="#t"/></svg></span></div><div class="c"><span class="cb"><svg viewBox="0 0 17 17"><use href="#t"/></svg></span></div><div class="c"><span class="cb"></span></div><div class="c"><span class="cb"></span></div><div class="c"><span class="cb"><svg viewBox="0 0 17 17"><use href="#t"/></svg></span></div><div class="c"><span class="cb"><svg viewBox="0 0 17 17"><use href="#t"/></svg></span></div><div></div>

          <div class="nm">Power/Comm.</div><div class="c"><span class="cb"><svg viewBox="0 0 17 17"><use href="#t"/></svg></span></div><div class="c"><span class="cb"><svg viewBox="0 0 17 17"><use href="#t"/></svg></span></div><div class="c"><span class="cb"></span></div><div class="c"><span class="cb"></span></div><div class="c"><span class="cb"><svg viewBox="0 0 17 17"><use href="#t"/></svg></span></div><div class="c"><span class="cb"><svg viewBox="0 0 17 17"><use href="#t"/></svg></span></div><div></div>

          <div class="nm">Space</div><div class="c"><span class="cb"><svg viewBox="0 0 17 17"><use href="#t"/></svg></span></div><div class="c"><span class="cb"><svg viewBox="0 0 17 17"><use href="#t"/></svg></span></div><div class="c"><span class="cb"></span></div><div class="c"><span class="cb"></span></div><div class="c"><span class="cb"><svg viewBox="0 0 17 17"><use href="#t"/></svg></span></div><div class="c"><span class="cb"><svg viewBox="0 0 17 17"><use href="#t"/></svg></span></div><div></div>

          <div class="nm">Toggle Layer Buttons</div><div class="c"><span class="cb"><svg viewBox="0 0 17 17"><use href="#t"/></svg></span></div><div class="c"><span class="cb"></span></div><div class="c"><span class="cb"></span></div><div class="c"><span class="cb"></span></div><div class="c"><span class="cb"><svg viewBox="0 0 17 17"><use href="#t"/></svg></span></div><div class="c"><span class="cb"><svg viewBox="0 0 17 17"><use href="#t"/></svg></span></div><div></div>

          <div class="nm">Wall</div><div class="c"><span class="cb"><svg viewBox="0 0 17 17"><use href="#t"/></svg></span></div><div class="c"><span class="cb"><svg viewBox="0 0 17 17"><use href="#t"/></svg></span></div><div class="c"><span class="cb"></span></div><div class="c"><span class="cb"></span></div><div class="c"><span class="cb"><svg viewBox="0 0 17 17"><use href="#t"/></svg></span></div><div class="c"><span class="cb"><svg viewBox="0 0 17 17"><use href="#t"/></svg></span></div><div></div>
        </div>
        <div class="hbar">
          <span class="hbar-btn"><svg viewBox="0 0 8 12" class="chev"><path d="M6.500 1L2 6L6.500 11"/></svg></span>
          <span class="hbar-track"></span>
          <span class="hbar-end"></span>
        </div>
      </div>
    </div>
    <footer class="dock">
      <span class="dock-tab">Shape Data</span>
      <span class="dock-tab cur">Lyr Mgr</span>
    </footer>
  </aside>
</div>
<div class="tooltip">Reset all layer settings, makes all visible, printable, snappable and gluable</div>
<svg class="cursor" viewBox="0 0 17 26" width="17" height="26"><path d="M1 1V20L5.500 16L9 24L12.500 22.500L9 15H15.500Z"/></svg>
</body>
</html>
```
FILE: styles.css
```css
* { box-sizing: border-box; }
html, body { margin: 0; padding: 0; }
body { width: 1141px; height: 849px; overflow: hidden; position: relative; background: #e9e9e9; font-family: "Open Sans", "Noto Sans", sans-serif; }
button { padding: 0; }

.app { display: flex; height: 849px; }

/* drawing window */
.work { width: 644px; flex: none; display: grid; grid-template-columns: 608px 3px 19px 14px; grid-template-rows: 783px 19px 1fr; }
.page { grid-column: 1; grid-row: 1; padding-top: 38px; }
.plan { display: block; outline: 1px solid #b4b6ba; background: #fff; }
.vscroll { grid-column: 3; grid-row: 1; display: flex; flex-direction: column; padding-top: 14px; padding-bottom: 3px; }
.sbtn { width: 19px; height: 19px; flex: none; background: #f6f6f6; border: 2px solid #c2c2c2; display: flex; align-items: center; justify-content: center; }
.strack { flex: 1; background: #e0e0e0; }
.strack.short { flex: none; height: 187px; }
.sthumb { height: 330px; flex: none; background: #fff; border: 2px solid #a9a9a9; }
.hscroll { grid-column: 1; grid-row: 2; display: flex; }
.hthumb { width: 266px; background: #fff; border: 2px solid #b0b0b0; border-left: 0; }
.htrack { flex: 1; background: #e0e0e0; }
.tri { display: block; width: 0; height: 0; }
.tri.up { border-left: 6px solid transparent; border-right: 6px solid transparent; border-bottom: 6px solid #6e6e6e; }
.tri.down { border-left: 6px solid transparent; border-right: 6px solid transparent; border-top: 6px solid #7e7e7e; }
.tri.right { border-top: 6px solid transparent; border-bottom: 6px solid transparent; border-left: 6px solid #7e7e7e; }

/* plan fills */
.f-white { fill: #fff; } .f-black { fill: #1c1c1c; } .f-dark { fill: #333; }
.f-floor { fill: #e7e2d4; } .f-hatch { fill: #ece8dc; } .f-hatchp { fill: url(#hatch); }
.f-cream { fill: #fffcf5; } .f-cream2 { fill: #ffeab0; } .f-wall { fill: #a8a49c; }
.f-col { fill: #c9c7b9; } .f-purple { fill: #a5799f; } .f-purple2 { fill: #a0949e; }
.f-magenta { fill: #ff66ff; } .f-green { fill: #5ad94f; }
.f-org { fill: #fdc75c; } .f-shelf { fill: #c8c9b4; }
.f-tan { fill: #f3b874; } .f-tan2 { fill: #c79d6e; } .f-brown { fill: #8f6f4c; }
.f-bluer { fill: #c6cfeb; } .f-mint { fill: #c4f6e5; } .f-pink { fill: #f0dfe9; } .f-green2 { fill: #dff7b4; } .f-lilac { fill: #dfbde9; } .f-salmon { fill: #f9b8a7; }
.f-gray { fill: #7f7f7f; } .f-blue { fill: #3b9ee8; }
.f-lime { fill: #7fff00; } .f-lime2 { fill: #00e83a; } .f-lime3 { fill: #00ff40; } .f-cyan { fill: #00ffff; } .f-amber { fill: #ffc000; } .f-red { fill: #ee2233; } .f-red2 { fill: #ff0000; }
.f-pill { fill: #a9ba6e; } .f-check { fill: #86bb3e; }
.f-b1 { fill: #d9d2e3; } .f-b2 { fill: #fde7ac; } .f-b3 { fill: #e0e8cd; } .f-b4 { fill: #f8cba8; }
.f-l1 { fill: #a6a6a6; } .f-l2 { fill: #0040ff; } .f-l3 { fill: #7f00ff; }

.s-thin { stroke: #3a3a3a; stroke-width: .7; }
.s-wall1 { stroke: #1e1e1e; stroke-width: 1; }
.s-pill { stroke: #38381f; stroke-width: .7; }
.s-wall { stroke: #222; stroke-width: 1.500; }
.s-brown { stroke: #6d5337; stroke-width: 1.500; }
.s-dash { stroke: #222; stroke-width: 1; stroke-dasharray: 1.500 1; }
.s-mag { stroke: #ff40ff; stroke-width: 1.200; }

.n-outer { fill: none; stroke: #a09e94; stroke-width: 2; }
.n-wall { fill: none; stroke: #222; stroke-width: 2; }
.n-wall1 { fill: none; stroke: #333; stroke-width: 1; }
.n-box { fill: none; stroke: #1c1c1c; stroke-width: 2; }
.n-door { fill: none; stroke: #26122a; stroke-width: 1.500; }
.n-green { fill: none; stroke: #7bf36a; stroke-width: 1; }
.n-mag { fill: none; stroke: #ff66ff; stroke-width: 1; }
.n-mag2 { fill: none; stroke: #ff66ff; stroke-width: 1.500; }
.n-dot { fill: none; stroke: #222; stroke-width: 1; stroke-dasharray: 1.200 1.200; }
.n-white { fill: none; stroke: #fff; stroke-width: 4; }
.n-tick { fill: none; stroke: #fff; stroke-width: 2; }
.n-oct { fill: none; stroke: #2a2a2a; stroke-width: 1.200; }
.n-leg { fill: #fff; stroke: #222; stroke-width: 1.500; }
.n-thin { fill: none; stroke: #1c1c1c; stroke-width: 1.200; }
.n-thick { fill: none; stroke: #111; stroke-width: 3; }

/* plan text */
.plan text { font-family: "DejaVu Sans", sans-serif; fill: #1c1c1c; }
.plan .m { text-anchor: middle; }
.plan .t-lab { font-size: 8px; }
.plan .t-lab2 { font-size: 8.700px; }
.plan .g { fill: #555; }
.plan .t-w { font-size: 9.500px; transform: translateY(-1px); }
.plan .t-card { font-size: 4.800px; fill: #4a4a22; }
.plan .t-pill { font-size: 4.800px; fill: #fff; text-anchor: middle; }
.plan .t-btn { font-family: "Noto Sans", sans-serif; font-size: 17.700px; fill: #111; text-anchor: middle; }
.plan .t-leg { font-size: 7.200px; fill: #222; }
.plan .t-lg { font-size: 5.500px; fill: #333; }
.plan .t-n { font-family: "Liberation Sans", sans-serif; font-size: 11px; font-weight: 700; fill: #111; text-anchor: middle; }
.plan .t-sc { font-size: 5.600px; fill: #444; text-anchor: middle; white-space: pre; }
.plan .t-sb { font-size: 5.800px; fill: #555; text-anchor: middle; }

/* layer manager panel */
.panel { flex: 1; min-width: 0; display: flex; flex-direction: column; height: 849px; overflow: hidden; }
.title { margin: 0; height: 58px; padding: 17px 0 0 5px; font-family: "Open Sans", sans-serif; font-weight: 400; font-size: 25.200px; line-height: 36px; color: #3c58a8; white-space: nowrap; }
.tabs { height: 23px; display: flex; align-items: flex-end; gap: 1px; padding-left: 4px; background: #f0f0f0; border-bottom: 2px solid #ababab; }
.tab { height: 19px; padding: 0 5.500px; font-size: 12.400px; line-height: 17px; color: #1c1c1c; background: #f0f0f0; border: 2px solid #b2b2b2; border-bottom: 0; white-space: nowrap; }
.tab.active { height: 23px; background: #fff; padding: 0 8px; line-height: 17px; margin-bottom: -2px; border-width: 1px 1px 0; margin-left: -1px; border-color: #ababab; }
.frame { height: 747px; background: #f0f0f0; border-left: 2px solid #ababab; border-bottom: 2px solid #ababab; padding: 2px 0 4px 2px; display: flex; flex-direction: column; }
.toolbar { height: 39px; flex: none; background: #e9f1fb; display: flex; align-items: center; padding-left: 8px; }
.grip { width: 3px; height: 24px; background-image: radial-gradient(circle, #7f7f7f 1.200px, transparent 1.400px); background-size: 3px 4px; margin-right: 11px; }
.ti { flex: none; display: block; }
.w14 { width: 14px; height: 17px; margin-right: 12px; }
.w18 { width: 18px; height: 18px; }
.tsep { width: 2px; height: 25px; background: #b4b4b8; margin-right: 9px; }
.tsep.s2 { margin: 0 11px 0 8px; width: 1px; }
.up1 { margin-right: 14px; }
.dn1 { margin-right: 10px; }
.hot { width: 25px; height: 24px; background: #cce4f7; display: flex; align-items: center; justify-content: center; margin-right: 11px; }
.lst { margin-right: 16px; }
.cfg { margin-right: 0; }
.ha { margin-right: 15px; }
.va { margin-right: 15px; }
.ex { margin-right: 12px; }
.more { width: 7px; height: 6px; margin-top: 25px; }
.i-dash { fill: none; stroke: #555; stroke-width: 1; stroke-dasharray: 1.500 1.500; }
.i-fill { fill: #111; }
.i-line { fill: none; stroke: #222; stroke-width: 1.200; }
.i-white { fill: #fff; stroke: #222; stroke-width: 1.200; }
.i-eye { fill: #fff; stroke: #111; stroke-width: 1.600; }
.i-thin { fill: none; stroke: #333; stroke-width: .9; }
.i-dots { stroke: #555; stroke-width: 1.600; }
.i-bar { stroke: #333; stroke-width: 1.500; }
.i-ring { fill: #fff; stroke: #111; stroke-width: 2; }
.i-gear { fill: none; stroke: #111; stroke-width: 1.800; stroke-dasharray: 2.400 1.200; }
.i-gline { stroke: #888; stroke-width: 1; }
.i-gfill { fill: #999; }

.grid-wrap { flex: 1; display: flex; flex-direction: column; background: #fff; border-left: 1px solid #9c9eb0; min-height: 0; border-top: 1px solid #d8d8d8; }
.grid { flex: 1; display: grid; grid-template-columns: 153px repeat(6, 50px) 39px; grid-template-rows: 25.500px repeat(21, 28.720px); align-content: start; min-height: 0; overflow: hidden; }
.hc { font-size: 13px; line-height: 24px; text-align: center; color: #1f1f1f; background: linear-gradient(#fff, #f3f3f3); border-right: 1px solid #dcdcdc; border-bottom: 1px solid #e4e4e4; white-space: nowrap; overflow: hidden; }
.name-h { border-left: 1px solid #ddd; color: #444; }
.more-h { color: #e0982c; text-align: left; padding-left: 36px; border-right: 0; }
.nm { font-size: 12.600px; line-height: 30px; color: #14338a; padding-left: 11px; margin-right: 7px; white-space: nowrap; overflow: hidden; }
.c { display: flex; align-items: center; padding-left: 10px; }
.cb { width: 17px; height: 17px; display: block; background: #fff; border: 1.500px solid #6a6a6a; position: relative; }
.cb svg { position: absolute; left: -1.500px; top: -1.500px; width: 17px; height: 17px; fill: none; stroke: #1a1a1a; stroke-width: 2.500; }
.cb.off { background: #e5e5e5; border-color: #c6c6c6; }

.hbar { height: 21px; flex: none; display: flex; background: #cbcbcb; }
.hbar-btn { width: 18px; margin-left: 4px; background: #f0f0f0; display: flex; align-items: center; justify-content: center; flex: none; }
.hbar-track { flex: 1; }
.hbar-end { width: 13px; background: #f0f0f0; flex: none; }
.chev { width: 8px; height: 12px; fill: none; stroke: #9a9a9a; stroke-width: 2; }

.dock { height: 21px; flex: none; background: #fff; display: flex; }
.dock-tab { font-size: 11.100px; line-height: 21px; color: #4e4e4e; padding: 0 10px 0 12px; border-right: 1px solid #e0e0e0; white-space: nowrap; }
.dock-tab.cur { font-size: 11.400px; font-weight: 700; color: #333; border-right: 0; padding-left: 9px; }

/* overlays */
.tooltip { position: absolute; left: 284px; top: 133px; width: 500px; height: 31px; background: #f0f1f7; border: 1.500px solid #7b7b7b; font-size: 14.150px; line-height: 29px; color: #5c5c5c; padding-left: 7px; white-space: nowrap; }
.cursor { position: absolute; left: 775px; top: 107px; fill: #fff; stroke: #111; stroke-width: 1.300; }
```
